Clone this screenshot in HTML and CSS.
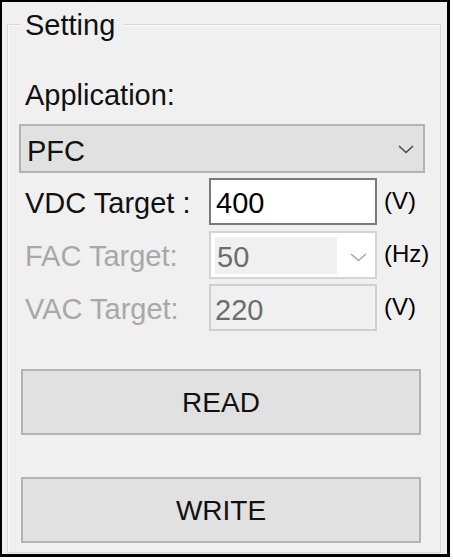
FILE: index.html
```html
<!DOCTYPE html>
<html>
<head>
<meta charset="utf-8">
<link rel="stylesheet" href="styles.css">
</head>
<body>
<div class="frame">
  <div class="group">
    <div class="legend">Setting</div>
    <div class="app-label">Application:</div>
    <div class="combo">
      <span class="combo-text">PFC</span>
      <svg class="chev" width="16" height="9" viewBox="0 0 16 9"><path d="M1 1 L8 7.5 L15 1" fill="none" stroke="#4a4a4a" stroke-width="1.6"/></svg>
    </div>
    <div class="row row-vdc">
      <span class="row-label">VDC Target :</span>
      <div class="textbox"><span>400</span></div>
      <span class="unit">(V)</span>
    </div>
    <div class="row row-fac">
      <span class="row-label disabled">FAC Target:</span>
      <div class="dcombo">
        <div class="dcombo-inner">50</div>
        <svg class="chev-d" width="17" height="9" viewBox="0 0 17 9"><path d="M1 1 L8.5 7.5 L16 1" fill="none" stroke="#a6a6a6" stroke-width="1.5"/></svg>
      </div>
      <span class="unit">(Hz)</span>
    </div>
    <div class="row row-vac">
      <span class="row-label disabled">VAC Target:</span>
      <div class="dtextbox">220</div>
      <span class="unit">(V)</span>
    </div>
    <button class="btn btn-read">READ</button>
    <button class="btn btn-write">WRITE</button>
  </div>
</div>
</body>
</html>
```

FILE: styles.css
```css
html, body {
  margin: 0;
  padding: 0;
  background: #ffffff;
}

body {
  font-family: "Liberation Sans", Arial, sans-serif;
  color: #111;
}

.frame {
  width: 450px;
  height: 557px;
  box-sizing: border-box;
  border-style: solid;
  border-color: #000;
  border-width: 2px 3px 3px 2px;
  background: #f0f0f0;
  display: flex;
  flex-direction: column;
}

.group {
  flex: 1;
  margin: 22px 6px 1px 5px;
  border: 1px solid #d9d9d9;
  box-shadow: inset 1px 1px 0 #fafafa;
  display: flex;
  flex-direction: column;
  align-items: flex-start;
}

.legend {
  margin-top: -16px;
  margin-left: 13px;
  padding: 0 8px 0 4px;
  background: #f0f0f0;
  font-size: 29px;
  line-height: 32px;
}

.app-label {
  margin-top: 38px;
  margin-left: 17px;
  font-size: 29px;
  line-height: 32px;
}

.combo {
  margin-top: 13px;
  margin-left: 11px;
  width: 406px;
  height: 49px;
  box-sizing: border-box;
  border: 2px solid #b3b3b3;
  background: #e1e1e1;
  display: flex;
  align-items: center;
  padding: 4px 9px 0 6px;
}

.combo-text {
  font-size: 29px;
  line-height: 32px;
  flex: 1;
}

.chev {
  margin-top: -2px;
}

.row {
  display: flex;
  align-items: center;
  margin-left: 17px;
}

.row-vdc { margin-top: 5px; }
.row-fac { margin-top: 6px; }
.row-vac { margin-top: 5px; }

.row-label {
  width: 184px;
  font-size: 29px;
  line-height: 32px;
  padding-top: 2px;
}

.row-label.disabled {
  color: #a8a8a8;
}

.textbox {
  width: 168px;
  height: 47px;
  box-sizing: border-box;
  border: 2px solid #7a7a7a;
  background: #fff;
  padding: 2px 0 0 5px;
  display: flex;
  align-items: center;
  font-size: 29px;
  line-height: 32px;
  color: #000;
}

.dcombo {
  width: 168px;
  height: 48px;
  box-sizing: border-box;
  border: 2px solid #d4d4d4;
  background: #fff;
  display: flex;
  align-items: center;
  padding-left: 4px;
}

.dcombo-inner {
  width: 122px;
  height: 37px;
  background: #f0f0f0;
  box-sizing: border-box;
  padding: 4px 0 0 2px;
  font-size: 29px;
  line-height: 32px;
  color: #6d6d6d;
}

.chev-d {
  margin-left: 13px;
  margin-top: 4px;
}

.dtextbox {
  width: 168px;
  height: 47px;
  box-sizing: border-box;
  border: 2px solid #d0d0d0;
  background: #f0f0f0;
  padding: 4px 0 0 4px;
  display: flex;
  align-items: center;
  font-size: 29px;
  line-height: 32px;
  color: #6d6d6d;
}

.unit {
  margin-left: 7px;
  font-size: 24px;
  line-height: 28px;
  color: #000;
  padding-bottom: 2px;
}

.btn {
  margin-left: 13px;
  width: 400px;
  height: 66px;
  box-sizing: border-box;
  border: 2px solid #b3b3b3;
  background: #e1e1e1;
  font-family: "Liberation Sans", Arial, sans-serif;
  font-size: 28px;
  line-height: 32px;
  color: #111;
  padding: 2px 0 0 0;
}

.btn-read { margin-top: 38px; }
.btn-write { margin-top: 42px; }
```
